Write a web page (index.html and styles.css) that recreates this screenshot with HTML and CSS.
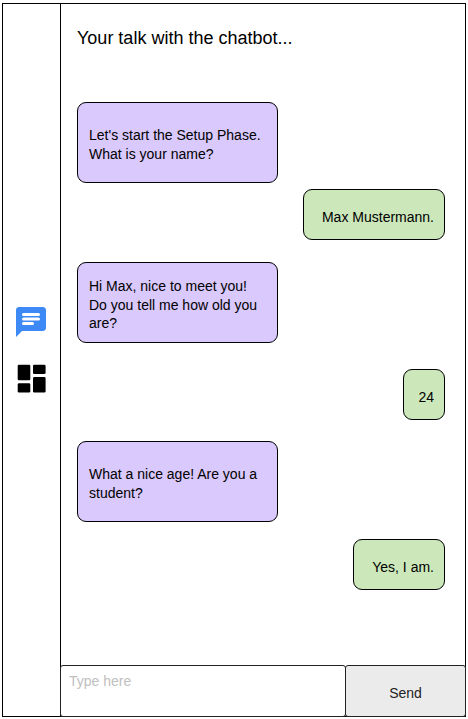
FILE: index.html
```html
<!DOCTYPE html>
<html lang="en">
<head>
<meta charset="utf-8">
<title>Chatbot</title>
<link rel="stylesheet" href="styles.css">
</head>
<body>
<div class="app">
  <nav class="sidebar">
    <svg class="icon-chat" viewBox="2 2 20 20" width="30" height="30"><path fill="#3d8af7" d="M20 2H4c-1.100 0-2 .9-2 2v18l4-4h14c1.100 0 2-.9 2-2V4c0-1.100-.9-2-2-2z"/><path stroke="#fff" stroke-width="2" stroke-linecap="round" d="M7 7H17M7 10H17M7 13H13"/></svg>
    <svg class="icon-board" viewBox="0 0 30 30" width="30" height="30"><rect x="1.700" y=".7" width="12.600" height="15.600" rx="1.300"/><rect x="17" y=".7" width="12.600" height="9.300" rx="1.300"/><rect x="1.700" y="19.300" width="12.600" height="9.300" rx="1.300"/><rect x="17" y="13.100" width="12.600" height="15.500" rx="1.300"/></svg>
  </nav>
  <main class="chat">
    <h1 class="title">Your talk with the chatbot...</h1>
    <div class="messages">
      <p class="bubble bot">Let's start the Setup Phase.<br>What is your name?</p>
      <p class="bubble user reply-name">Max Mustermann.</p>
      <p class="bubble bot ask-age">Hi Max, nice to meet you!<br>Do you tell me how old you<br>are?</p>
      <p class="bubble user reply-age">24</p>
      <p class="bubble bot ask-student">What a nice age! Are you a<br>student?</p>
      <p class="bubble user reply-student">Yes, I am.</p>
    </div>
    <form class="composer">
      <textarea class="entry" placeholder="Type here"></textarea>
      <button class="send" type="button">Send</button>
    </form>
  </main>
</div>
</body>
</html>
```
FILE: styles.css
```css
* { box-sizing: border-box; }
body {
  margin: 0;
  padding: 3px 2px 2px;
  height: 719px;
  overflow: hidden;
  background: #fff;
  color: #000;
  font: 14px/18.67px "Liberation Sans", Arial, sans-serif;
}
.app {
  display: flex;
  width: 464px;
  height: 714px;
  border: 1px solid #000;
}
.sidebar {
  display: flex;
  flex-direction: column;
  align-items: flex-start;
  gap: 27px;
  width: 57px;
  padding: 303px 0 0 13px;
}
.chat {
  display: flex;
  flex-direction: column;
  flex: 1;
  border-left: 1px solid #000;
}
.title {
  margin: 0;
  padding: 22px 16px 0;
  height: 98px;
  font-size: 18px;
  font-weight: 400;
  line-height: 24px;
}
.messages {
  display: flex;
  flex-direction: column;
  flex: 1;
  padding: 0 20px 0 16px;
}
.bubble {
  display: flex;
  flex-direction: column;
  justify-content: center;
  margin: 0;
  border: 1px solid #000;
  border-radius: 9px;
  white-space: nowrap;
}
.bot {
  display: block;
  width: 201px;
  height: 81px;
  padding: 23px 11px 0;
  background: #dac9fc;
}
.user {
  align-self: flex-end;
  align-items: flex-end;
  height: 51px;
  padding: 6px 10px 0 0;
  background: #cce8bb;
}
.reply-name { width: 142px; margin-top: 6px; }
.ask-age { margin-top: 22px; padding-top: 14px; }
.reply-age { width: 42px; margin-top: 26px; }
.ask-student { margin-top: 21px; }
.reply-student { width: 92px; margin-top: 17px; }
.composer {
  display: flex;
  height: 52px;
  margin: 0 -1px -1px;
}
.entry {
  flex: 1;
  min-width: 0;
  margin: 0 -1px 0 0;
  padding: 6px 8px;
  border: 1px solid #222;
  border-radius: 3px;
  outline: 0;
  resize: none;
  background: #fff;
  font: inherit;
}
.entry::placeholder { color: #c0c0c0; }
.send {
  width: 121px;
  padding: 4px 0 0;
  border: 1px solid #222;
  border-radius: 3px;
  background: #ebebeb;
  color: #222;
  font: inherit;
}
```
